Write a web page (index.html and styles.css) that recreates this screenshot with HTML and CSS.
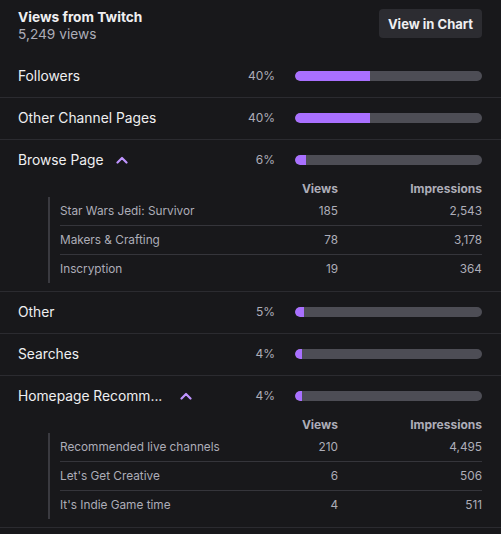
FILE: index.html
```html
<!DOCTYPE html>
<html>
<head>
<meta charset="utf-8">
<link rel="stylesheet" href="styles.css">
</head>
<body>
<div class="panel">
  <div class="head">
    <div class="titles">
      <div class="title">Views from Twitch</div>
      <div class="sub">5,249 views</div>
    </div>
    <button class="btn">View in Chart</button>
  </div>

  <div class="row">
    <div class="main">
      <div class="label"><span class="name">Followers</span></div>
      <div class="pct">40%</div>
      <div class="bar"><div class="fill" style="width:40%"></div></div>
    </div>
  </div>

  <div class="row">
    <div class="main">
      <div class="label"><span class="name">Other Channel Pages</span></div>
      <div class="pct">40%</div>
      <div class="bar"><div class="fill" style="width:40%"></div></div>
    </div>
  </div>

  <div class="row">
    <div class="main">
      <div class="label"><span class="name">Browse Page</span>
        <svg class="chev" width="12" height="8" viewBox="0 0 12 8"><path d="M1.5 6.5 L6 2 L10.5 6.5" fill="none" stroke="#bf94ff" stroke-width="2.2" stroke-linecap="round" stroke-linejoin="round"/></svg>
      </div>
      <div class="pct">6%</div>
      <div class="bar"><div class="fill" style="width:6%"></div></div>
    </div>
    <div class="detail">
      <div class="dhead"><span></span><span>Views</span><span>Impressions</span></div>
      <div class="dtable">
        <div class="drow"><span class="dname">Star Wars Jedi: Survivor</span><span>185</span><span>2,543</span></div>
        <div class="drow"><span class="dname">Makers &amp; Crafting</span><span>78</span><span>3,178</span></div>
        <div class="drow"><span class="dname">Inscryption</span><span>19</span><span>364</span></div>
      </div>
    </div>
  </div>

  <div class="row">
    <div class="main">
      <div class="label"><span class="name">Other</span></div>
      <div class="pct">5%</div>
      <div class="bar"><div class="fill" style="width:5%"></div></div>
    </div>
  </div>

  <div class="row">
    <div class="main">
      <div class="label"><span class="name">Searches</span></div>
      <div class="pct">4%</div>
      <div class="bar"><div class="fill" style="width:4%"></div></div>
    </div>
  </div>

  <div class="row">
    <div class="main">
      <div class="label"><span class="name trunc">Homepage Recomm...</span>
        <svg class="chev" width="12" height="8" viewBox="0 0 12 8"><path d="M1.5 6.5 L6 2 L10.5 6.5" fill="none" stroke="#bf94ff" stroke-width="2.2" stroke-linecap="round" stroke-linejoin="round"/></svg>
      </div>
      <div class="pct">4%</div>
      <div class="bar"><div class="fill" style="width:4%"></div></div>
    </div>
    <div class="detail">
      <div class="dhead"><span></span><span>Views</span><span>Impressions</span></div>
      <div class="dtable">
        <div class="drow"><span class="dname">Recommended live channels</span><span>210</span><span>4,495</span></div>
        <div class="drow"><span class="dname">Let's Get Creative</span><span>6</span><span>506</span></div>
        <div class="drow"><span class="dname">It's Indie Game time</span><span>4</span><span>511</span></div>
      </div>
    </div>
  </div>
</div>
</body>
</html>
```

FILE: styles.css
```css
html, body {
  margin: 0;
  padding: 0;
  background: #18181b;
}
body {
  font-family: Inter, "Noto Sans", sans-serif;
  color: #efeff1;
}
.panel {
  width: 501px;
}
.head {
  box-sizing: border-box;
  display: flex;
  justify-content: space-between;
  align-items: flex-start;
  height: 56px;
  padding: 8px 19px 0 18px;
}
.title {
  font-size: 13.7px;
  font-weight: 700;
  line-height: 18px;
}
.sub {
  font-size: 13.7px;
  line-height: 17px;
  color: #adadb8;
}
.btn {
  margin-top: 1px;
  height: 29px;
  width: 103px;
  padding: 0;
  border: none;
  border-radius: 4px;
  background: #2c2c31;
  color: #efeff1;
  font-family: Inter, "Noto Sans", sans-serif;
  font-size: 13px;
  font-weight: 700;
}
.row {
  border-bottom: 1px solid #2b2b30;
}
.main {
  box-sizing: border-box;
  display: grid;
  grid-template-columns: 1fr 40px 187px;
  column-gap: 20px;
  align-items: center;
  height: 41px;
  padding: 0 19px 2px 18px;
}
.label {
  display: flex;
  align-items: center;
  gap: 12px;
  font-size: 13.8px;
  color: #efeff1;
  min-width: 0;
}
.name {
  white-space: nowrap;
}
.trunc {
  display: block;
  width: 150px;
}
.chev {
  display: block;
  flex: none;
}
.pct {
  text-align: right;
  font-size: 12px;
  color: #adadb8;
}
.bar {
  height: 10px;
  border-radius: 5px;
  background: #4d4d55;
  overflow: hidden;
}
.fill {
  height: 100%;
  background: #a970ff;
  border-radius: 5px 0 0 5px;
}
.detail {
  padding: 0 19px 8px 48px;
}
.dhead {
  display: grid;
  grid-template-columns: 1fr 60px 144px;
  margin-left: 12px;
  height: 14px;
  align-items: center;
  font-size: 12px;
  font-weight: 700;
  color: #adadb8;
  margin-bottom: 2px;
  text-align: right;
}
.dtable {
  border-left: 2px solid #3a3a40;
  padding-left: 10px;
}
.drow {
  display: grid;
  grid-template-columns: 1fr 60px 144px;
  align-items: center;
  height: 28px;
  font-size: 11.8px;
  color: #adadb8;
  text-align: right;
  border-bottom: 1px solid #35353b;
}
.drow:last-child {
  border-bottom: none;
}
.dname {
  text-align: left;
}
```
